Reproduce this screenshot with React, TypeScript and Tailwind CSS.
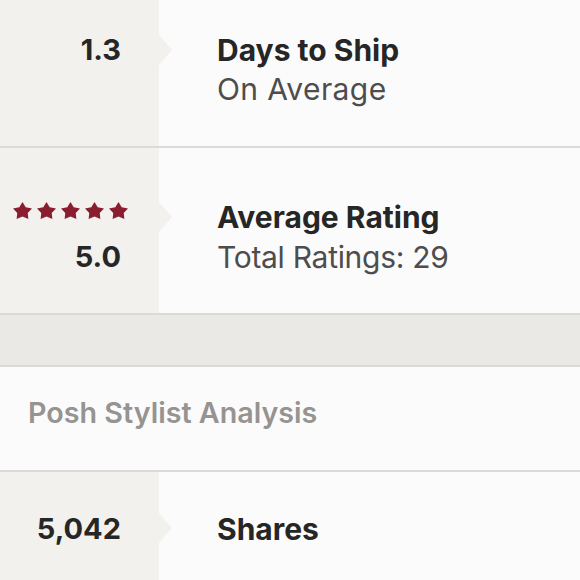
import React from "react";

const Star = () => (
  <svg width="19" height="17" viewBox="2.5 2 19 18.1" preserveAspectRatio="none" className="block">
    <path
      d="M12 2L15.23 7.55L21.51 8.91L17.23 13.70L17.88 20.09L12 17.5L6.12 20.09L6.77 13.70L2.49 8.91L8.77 7.55Z"
      fill="#8a1d30"
    />
  </svg>
);

export default function App() {
  const font = { fontFamily: "Inter, 'Open Sans', sans-serif" };
  return (
    <div className="w-[580px] h-[580px] overflow-hidden bg-[#fcfbfb]" style={font}>
      {/* Row 1 */}
      <div className="flex h-[148px] border-b-2 border-[#dcdad7]">
        <div className="relative w-[159px] bg-[#f3f1ee] pt-[30px] pr-[38px] text-right">
          <div className="text-[29px] leading-[40px] font-bold text-[#262626]">1.3</div>
          <div className="absolute right-[-13px] top-[35px] w-0 h-0 border-t-[15px] border-b-[15px] border-l-[13px] border-t-transparent border-b-transparent border-l-[#f3f1ee]" />
        </div>
        <div className="flex-1 pl-[58px] pt-[30px]">
          <div className="text-[30px] leading-[40px] font-bold text-[#262626]">Days to Ship</div>
          <div className="text-[30px] leading-[39px] tracking-[0.4px] text-[#4d4d4d]">On Average</div>
        </div>
      </div>
      {/* Row 2 */}
      <div className="flex h-[167px] border-b-2 border-[#dcdad7]">
        <div className="relative w-[159px] bg-[#f3f1ee] pt-[49px] pr-[38px]">
          <div className="h-[40px] flex items-start justify-end gap-[5px] mr-[-7px] pt-[5px]">
            <Star />
            <Star />
            <Star />
            <Star />
            <Star />
          </div>
          <div className="text-right text-[29px] leading-[40px] font-bold text-[#262626]">5.0</div>
          <div className="absolute right-[-13px] top-[54px] w-0 h-0 border-t-[15px] border-b-[15px] border-l-[13px] border-t-transparent border-b-transparent border-l-[#f3f1ee]" />
        </div>
        <div className="flex-1 pl-[58px] pt-[49px]">
          <div className="text-[30px] leading-[40px] font-bold text-[#262626]">Average Rating</div>
          <div className="text-[30px] leading-[40px] tracking-[-0.3px] text-[#4d4d4d]">Total Ratings: 29</div>
        </div>
      </div>
      {/* Gray band */}
      <div className="h-[52px] bg-[#ebe9e6] border-b-2 border-[#dcdad7]" />
      {/* Posh Stylist Analysis */}
      <div className="h-[105px] border-b-2 border-[#dcdad7] pl-[28px] pt-[26px]">
        <div className="text-[28.7px] leading-[40px] font-semibold text-[#969391]">Posh Stylist Analysis</div>
      </div>
      {/* Row 4 */}
      <div className="flex h-[120px]">
        <div className="relative w-[159px] bg-[#f3f1ee] pt-[37px] pr-[38px] text-right">
          <div className="text-[29px] leading-[40px] font-bold text-[#262626]">5,042</div>
          <div className="absolute right-[-13px] top-[41px] w-0 h-0 border-t-[15px] border-b-[15px] border-l-[13px] border-t-transparent border-b-transparent border-l-[#f3f1ee]" />
        </div>
        <div className="flex-1 pl-[58px] pt-[37px]">
          <div className="text-[30px] leading-[40px] font-bold text-[#262626]">Shares</div>
        </div>
      </div>
    </div>
  );
}
